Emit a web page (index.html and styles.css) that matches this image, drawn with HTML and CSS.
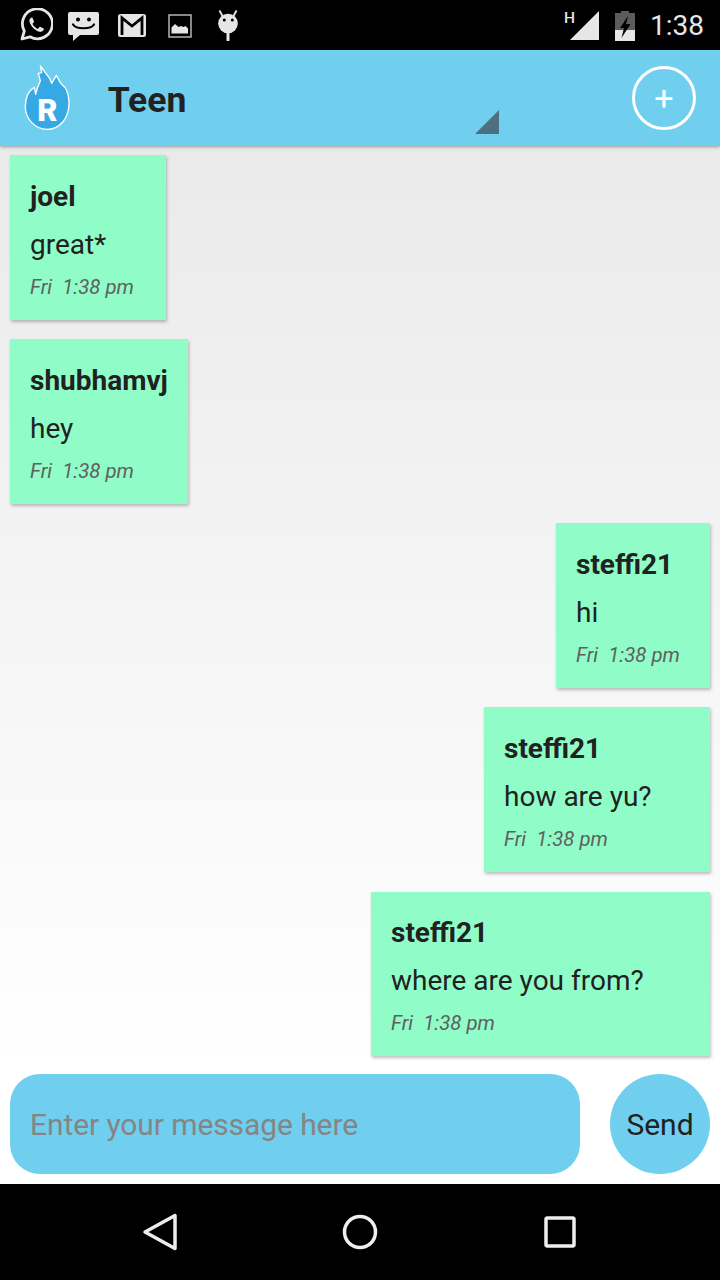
FILE: index.html
```html
<!DOCTYPE html>
<html lang="en">
<head>
    <meta charset="UTF-8">
    <meta name="viewport" content="width=device-width, initial-scale=1.0">
    <title>Teen</title>
    <link rel="stylesheet" href="styles.css">
</head>
<body>
    <div class="phone">
        <!-- status bar -->
        <div class="status-bar">
            <div class="status-left">
                <svg class="st-whatsapp" width="34" height="34" viewBox="0 0 34 34">
                    <path d="M3 31l2.300-8A15 15 0 1 1 11 28.800z" fill="none" stroke="#e6e6e6" stroke-width="2.800" stroke-linejoin="round"/>
                    <path d="M12.500 9.500c-1.500.8-2.500 2.200-2 4.300 1 4 5.500 9 10 10 2 .4 3.600-.6 4.300-2.200.2-.6 0-1-.5-1.300l-2.800-1.400c-.5-.2-.9-.1-1.200.3l-1 1.300c-.3.300-.6.300-1 .2-2-.9-3.600-2.400-4.600-4.400-.2-.4-.1-.7.200-1l.9-1.100c.2-.3.300-.7.100-1.100l-1.200-2.900c-.3-.6-.7-.7-1.200-.5z" fill="#e6e6e6"/>
                </svg>
                <svg class="st-chat" width="31" height="29" viewBox="0 0 31 29">
                    <path d="M2 0h27a2 2 0 0 1 2 2v19a2 2 0 0 1-2 2H12l-7 6v-6H2a2 2 0 0 1-2-2V2a2 2 0 0 1 2-2z" fill="#e6e6e6"/>
                    <circle cx="10" cy="7.500" r="2" fill="#000"/>
                    <circle cx="21" cy="7.500" r="2" fill="#000"/>
                    <path d="M5 12.500c3 5 18 5 21 0" fill="none" stroke="#000" stroke-width="2.200" stroke-linecap="round"/>
                </svg>
                <svg class="st-gmail" width="28" height="23" viewBox="0 0 28 23">
                    <rect width="28" height="23" rx="2.500" fill="#e6e6e6"/>
                    <path d="M4 21V4L14 12 24 4v17" fill="none" stroke="#000" stroke-width="2.800"/>
                </svg>
                <svg class="st-image" width="24" height="24" viewBox="0 0 24 24">
                    <rect x="1" y="1" width="22" height="22" fill="none" stroke="#b5b5b5" stroke-width="1.500"/>
                    <path d="M3.500 19.500v-6L7 10l3.500 3 2.500-1 2.500 1 2-1 2.500 2.500v5z" fill="#e6e6e6"/>
                </svg>
                <svg class="st-droid" width="20" height="31" viewBox="0 0 20 31">
                    <path d="M4.500 6L1.500.5M15.500 6L18.500.5" stroke="#e6e6e6" stroke-width="1.800"/>
                    <circle cx="10" cy="13.500" r="9.800" fill="#e6e6e6"/>
                    <circle cx="6.300" cy="10" r="1.500" fill="#000"/>
                    <circle cx="14.300" cy="10" r="1.500" fill="#000"/>
                    <rect x="8.500" y="22" width="3" height="9" fill="#e6e6e6"/>
                </svg>
            </div>
            <div class="status-right">
                <span class="st-h">H</span>
                <svg class="st-signal" width="30" height="29" viewBox="0 0 30 29">
                    <path d="M30 0v29H1z" fill="#e6e6e6"/>
                </svg>
                <svg class="st-battery" width="20" height="30" viewBox="0 0 20 30">
                    <path d="M6 0h8v2h6v28H0V2h6z" fill="#5c5c5c"/>
                    <rect y="19" width="20" height="11" fill="#e6e6e6"/>
                    <path d="M13 5L5 17h4l-2.500 10L15.500 13H11z" fill="#000"/>
                </svg>
                <span class="st-time">1:38</span>
            </div>
        </div>

        <!-- action bar -->
        <div class="app-bar">
            <svg class="logo" width="48.330" height="66.670" viewBox="70 45 145 200">
                <path d="M122 48L126 68 116 70 122 92 112 118 108 133 104 112C86 122 77 145 77 170 77 205 105 238 142 238 180 238 208 205 208 160 208 140 203 124 197 114L182 98 170 76 156 100 150 85z" fill="#36a9e4" stroke="#fff" stroke-width="4" stroke-linejoin="round"/>
                <text x="143" y="212" class="logo-r">R</text>
            </svg>
            <div class="spinner">
                <span class="title">Teen</span>
                <svg class="spinner-arrow" width="24" height="24" viewBox="0 0 24 24">
                    <path d="M24 0v24H0z" fill="#4e6f80"/>
                </svg>
            </div>
            <div class="add-btn">+</div>
        </div>

        <!-- messages -->
        <div class="messages">
            <div class="bubble bubble-joel">
                <div class="name">joel</div>
                <div class="text">great*</div>
                <div class="time">Fri&nbsp; 1:38 pm</div>
            </div>
            <div class="bubble">
                <div class="name">shubhamvj</div>
                <div class="text">hey</div>
                <div class="time">Fri&nbsp; 1:38 pm</div>
            </div>
            <div class="bubble mine bubble-hi">
                <div class="name">steffi21</div>
                <div class="text">hi</div>
                <div class="time">Fri&nbsp; 1:38 pm</div>
            </div>
            <div class="bubble mine bubble-how">
                <div class="name">steffi21</div>
                <div class="text">how are yu?</div>
                <div class="time">Fri&nbsp; 1:38 pm</div>
            </div>
            <div class="bubble mine bubble-where">
                <div class="name">steffi21</div>
                <div class="text">where are you from?</div>
                <div class="time">Fri&nbsp; 1:38 pm</div>
            </div>
        </div>

        <!-- input row -->
        <div class="input-row">
            <input class="msg-input" type="text" placeholder="Enter your message here">
            <button class="send-btn">Send</button>
        </div>

        <!-- nav bar -->
        <div class="nav-bar">
            <svg width="36" height="38" viewBox="0 0 36 38">
                <path d="M33 2.500v33L3 19z" fill="none" stroke="#eee" stroke-width="3.500" stroke-linejoin="round"/>
            </svg>
            <svg class="nav-home" width="36" height="36" viewBox="0 0 36 36">
                <circle cx="18" cy="18" r="15.500" fill="none" stroke="#eee" stroke-width="3.500"/>
            </svg>
            <svg width="32" height="32" viewBox="0 0 32 32">
                <rect x="2" y="2" width="28" height="28" rx="1.500" fill="none" stroke="#eee" stroke-width="3.500"/>
            </svg>
        </div>
    </div>
</body>
</html>
```

FILE: styles.css
```css
/* general */
* {
    box-sizing: border-box;
}

body {
    margin: 0;
    background-color: #fff;
    font-family: 'Roboto', sans-serif;
    color: #212121;
}

.phone {
    width: 720px;
    height: 1280px;
    display: flex;
    flex-direction: column;
    overflow: hidden;
}

/* status bar */
.status-bar {
    height: 50px;
    background-color: #000;
    display: flex;
    justify-content: space-between;
    align-items: center;
    flex-shrink: 0;
}

.status-left {
    display: flex;
    align-items: center;
    padding-left: 19px;
}

.st-chat {
    margin-left: 15px;
    margin-top: 3px;
}

.st-gmail {
    margin-left: 19px;
    margin-top: 1px;
}

.st-image {
    margin-left: 22px;
    margin-top: 1px;
}

.st-droid {
    margin-left: 26px;
    margin-top: 1px;
}

.status-right {
    display: flex;
    align-items: center;
    padding-right: 16px;
}

.st-h {
    font-size: 15.500px;
    line-height: 15px;
    font-weight: 500;
    color: #e6e6e6;
    align-self: flex-start;
    margin-top: 2px;
    margin-right: -6px;
}

.st-battery {
    margin-left: 16px;
    margin-top: 2px;
}

.st-time {
    margin-left: 15px;
    font-size: 28px;
    color: #e6e6e6;
}

/* action bar */
.app-bar {
    height: 96px;
    background-color: #70cfee;
    display: flex;
    align-items: center;
    padding-left: 23.330px;
    box-shadow: 0 1px 3px rgba(0, 0, 0, 0.35);
    position: relative;
    flex-shrink: 0;
}

.logo {
    flex-shrink: 0;
}

.logo-r {
    font-family: 'Roboto', sans-serif;
    font-size: 93px;
    font-weight: 900;
    fill: #fff;
    text-anchor: middle;
}

.spinner {
    width: 427.340px;
    height: 84px;
    padding-left: 36px;
    display: flex;
    justify-content: space-between;
    align-items: center;
    align-self: flex-end;
}

.title {
    font-size: 35.500px;
    font-weight: 700;
    margin-top: -8px;
}

.spinner-arrow {
    align-self: flex-end;
    margin-bottom: 12px;
}

.add-btn {
    width: 64px;
    height: 64px;
    margin-left: 133px;
    border: 3px solid #fff;
    border-radius: 50%;
    color: #fff;
    font-size: 34px;
    font-weight: 400;
    display: flex;
    justify-content: center;
    align-items: center;
    flex-shrink: 0;
}

/* messages */
.messages {
    flex: 1;
    padding: 9.400px 10px 0;
    display: flex;
    flex-direction: column;
    gap: 19.450px;
    background: linear-gradient(#eaeaea, #fff);
}

.bubble {
    align-self: flex-start;
    height: 164.600px;
    padding: 20.800px 20px 0;
    background-color: #90fdc8;
    box-shadow: 1px 2px 3px rgba(0, 0, 0, 0.25);
}

.bubble.mine {
    align-self: flex-end;
}

/* these keep the extra room on the right that the real bubbles have */
.bubble-joel {
    width: 156px;
}

.bubble-hi {
    width: 154px;
}

.bubble-how {
    width: 226px;
}

.bubble-where {
    width: 339px;
}

.name {
    font-size: 28px;
    font-weight: 700;
    line-height: 42px;
}

.text {
    font-size: 28px;
    line-height: 42px;
    margin-top: 6px;
}

.time {
    font-size: 20.400px;
    font-style: italic;
    color: #5f5f5f;
    line-height: 30px;
    margin-top: 6px;
}

/* input row */
.input-row {
    height: 120px;
    padding: 10px;
    display: flex;
    justify-content: space-between;
    background-color: #fff;
    flex-shrink: 0;
}

.msg-input {
    width: 570px;
    height: 100px;
    border: none;
    outline: none;
    border-radius: 30px;
    background-color: #70cfee;
    padding: 0 20px;
    font-family: 'Roboto', sans-serif;
    font-size: 30px;
    letter-spacing: -0.090px;
    color: #212121;
}

.msg-input::placeholder {
    color: #858585;
    opacity: 1;
}

.send-btn {
    width: 100px;
    height: 100px;
    border: none;
    border-radius: 50%;
    background-color: #70cfee;
    padding: 0;
    font-family: 'Roboto', sans-serif;
    font-size: 30px;
    color: #212121;
}

/* nav bar */
.nav-bar {
    height: 96px;
    background-color: #000;
    display: flex;
    align-items: center;
    justify-content: space-between;
    padding: 0 144px 0 142px;
    flex-shrink: 0;
}

.nav-home {
    margin-left: -2px;
}
```
